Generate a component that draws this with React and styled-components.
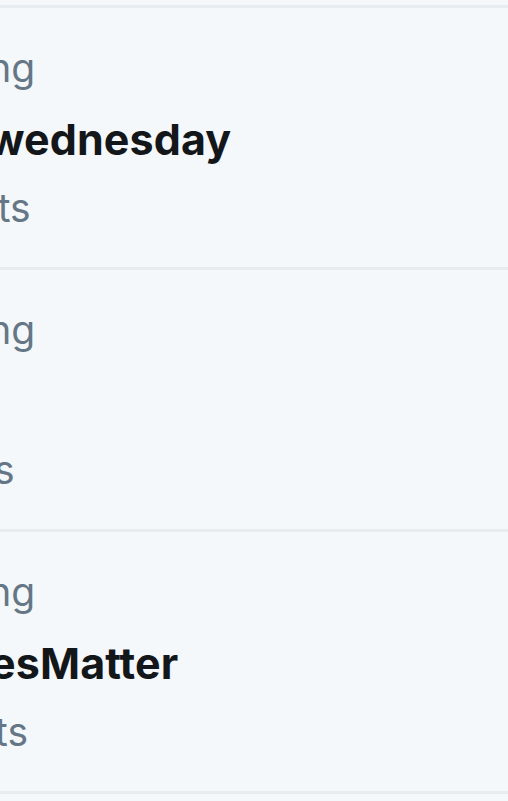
import React from "react";
import styled, { createGlobalStyle } from "styled-components";

const GlobalStyle = createGlobalStyle`
  html, body {
    margin: 0;
    padding: 0;
    background: #f5f8fa;
  }
  body {
    font-family: Inter, "Noto Sans", sans-serif;
    overflow: hidden;
  }
`;

const trends = [
  { id: 1, meta: "US · Trending", topic: "#workoutwednesday", count: "12.4K Tweets" },
  { id: 2, meta: "US · Trending", topic: "#Oscars", count: "1.2M Tweets" },
  { id: 3, meta: "US · Trending", topic: "#BlackLivesMatter", count: "13.6K Tweets" },
];

const App = () => {
  return (
    <>
      <GlobalStyle />
      <StTrendList>
        {trends.map((trend) => (
          <StTrendItem key={trend.id}>
            <StContent>
              <StMeta>{trend.meta}</StMeta>
              <StTopic>{trend.topic}</StTopic>
              <StCount>{trend.count}</StCount>
            </StContent>
          </StTrendItem>
        ))}
      </StTrendList>
    </>
  );
};

const StTrendList = styled.ul`
  list-style: none;
  margin: 5px 0 0;
  padding: 0;
  border-top: 3px solid #e6ecf0;
`;

const StTrendItem = styled.li`
  padding: 36px 0 35px;
  border-bottom: 3px solid #e6ecf0;
  background: #f5f8fa;
`;

const StContent = styled.div`
  display: flex;
  flex-direction: column;
  margin-left: -215px;
  white-space: nowrap;
`;

const StMeta = styled.span`
  color: #657786;
  font-size: 39px;
  line-height: 48px;
`;

const StTopic = styled.span`
  margin: 20px 0 18px;
  color: #14171a;
  font-weight: 700;
  font-size: 43px;
  line-height: 54px;
  letter-spacing: 0.1px;
`;

const StCount = styled.span`
  color: #657786;
  font-size: 39px;
  line-height: 48px;
`;

export default App;
